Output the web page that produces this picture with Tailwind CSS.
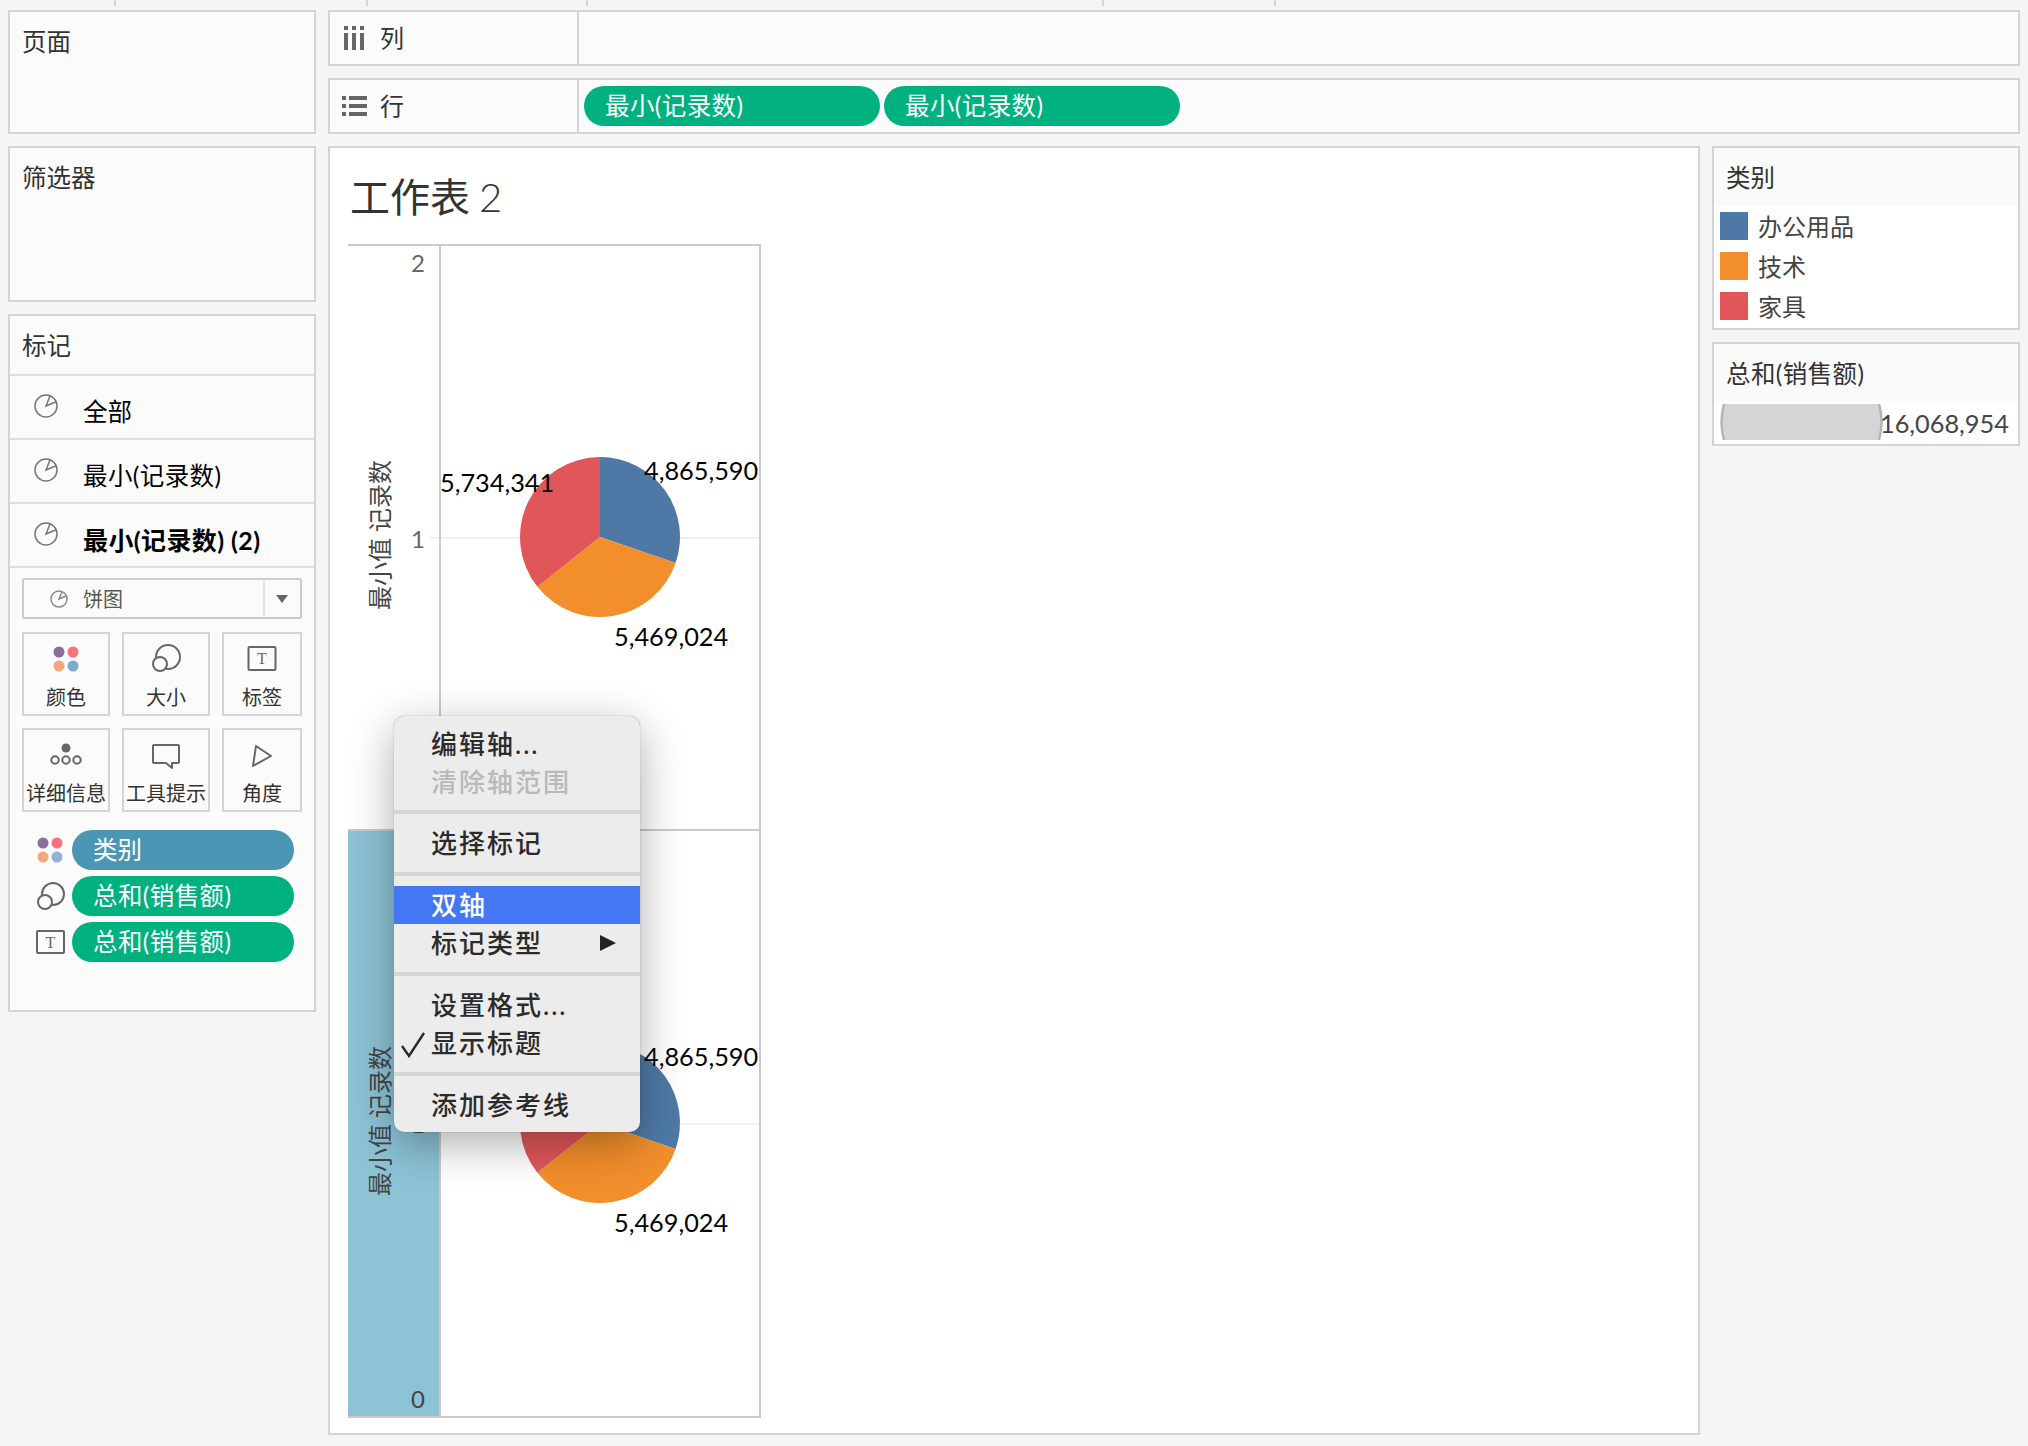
<!DOCTYPE html>
<html lang="zh">
<head>
    <meta charset="UTF-8">
    <title>工作表 2</title>
    <script src="https://cdn.jsdelivr.net/npm/@tailwindcss/browser@4"></script>
</head>
<body class="bg-[#f5f5f5] w-[2028px] h-[1446px] overflow-hidden font-[Lato,'Noto_Sans_CJK_SC',sans-serif] text-[#333]">

    <!-- strip of ticks on top -->
    <div class="flex h-[6px] mb-[4px]">
        <div class="w-[116px] border-r-2 border-[#d4d4d4]"></div>
        <div class="w-[252px] border-r-2 border-[#d4d4d4]"></div>
        <div class="w-[220px] border-r-2 border-[#d4d4d4]"></div>
        <div class="w-[516px] border-r-2 border-[#d4d4d4]"></div>
        <div class="w-[172px] border-r-2 border-[#d4d4d4]"></div>
    </div>

    <div class="flex px-[8px]">

        <!-- left column -->
        <div class="w-[308px] flex flex-col gap-[12px]">
            <div class="h-[124px] bg-[#fbfbfb] border-2 border-[#d4d4d4] pl-[12px] pt-[15px] text-[24.5px] leading-[30px]">页面</div>
            <div class="h-[156px] bg-[#fbfbfb] border-2 border-[#d4d4d4] pl-[12px] pt-[15px] text-[24.5px] leading-[30px]">筛选器</div>

            <div class="h-[698px] bg-[#fbfbfb] border-2 border-[#d4d4d4]">
                <div class="h-[60px] border-b-2 border-[#dedede] pl-[12px] pt-[15px] text-[24.5px] leading-[30px]">标记</div>

                <div class="h-[64px] border-b-2 border-[#dedede] flex items-start pl-[23px] pt-[17px] gap-[24px] text-black">
                    <svg width="26" height="26" viewBox="0 0 26 26" fill="none" stroke="#777" stroke-width="1.5"><circle cx="13" cy="13" r="11"/><path d="M17 3 13 13 23 8.7"/></svg>
                    <span class="text-[24.5px] leading-[30px] mt-[4px]">全部</span>
                </div>
                <div class="h-[64px] border-b-2 border-[#dedede] flex items-start pl-[23px] pt-[17px] gap-[24px] text-black">
                    <svg width="26" height="26" viewBox="0 0 26 26" fill="none" stroke="#777" stroke-width="1.5"><circle cx="13" cy="13" r="11"/><path d="M17 3 13 13 23 8.7"/></svg>
                    <span class="text-[24.5px] leading-[30px] mt-[4px] tracking-[0.4px]">最小(记录数)</span>
                </div>
                <div class="h-[64px] border-b-2 border-[#dedede] flex items-start pl-[23px] pt-[17px] gap-[24px] text-black">
                    <svg width="26" height="26" viewBox="0 0 26 26" fill="none" stroke="#777" stroke-width="1.5"><circle cx="13" cy="13" r="11"/><path d="M17 3 13 13 23 8.7"/></svg>
                    <span class="text-[25px] leading-[30px] mt-[4px] font-bold tracking-[0.4px]">最小(记录数) (2)</span>
                </div>

                <!-- mark type select -->
                <div class="mx-[12px] mt-[10px] h-[41px] border-2 border-[#ccc] rounded-[2px] flex items-center">
                    <div class="w-[241px] h-full border-r-2 border-[#e4e4e4] flex items-center pl-[25px] gap-[14px]">
                        <svg width="20" height="20" viewBox="0 0 20 20" fill="none" stroke="#888" stroke-width="1.5"><circle cx="10" cy="10" r="8"/><path d="M13 3 10 10 17 7"/></svg>
                        <span class="text-[20px] leading-[24px] text-[#555]">饼图</span>
                    </div>
                    <svg class="ml-[10px]" width="14" height="10" viewBox="0 0 14 10"><path d="M1 1h12L7 9z" fill="#666"/></svg>
                </div>

                <!-- mark cards -->
                <div class="mx-[12px] mt-[13px] grid grid-cols-[88px_88px_80px] gap-x-[12px] gap-y-[12px]">
                    <div class="h-[84px] border-2 border-[#d4d4d4] flex flex-col items-center pt-[9px]">
                        <svg width="32" height="32" viewBox="0 0 32 32"><circle cx="9" cy="9" r="5.5" fill="#8a6f9b"/><circle cx="23" cy="9" r="5.5" fill="#f7727f"/><circle cx="9" cy="23" r="5.5" fill="#f4a67a"/><circle cx="23" cy="23" r="5.5" fill="#7ea6cf"/></svg>
                        <span class="text-[20px] leading-[24px] mt-[10px] whitespace-nowrap">颜色</span>
                    </div>
                    <div class="h-[84px] border-2 border-[#d4d4d4] flex flex-col items-center pt-[9px]">
                        <svg width="32" height="32" viewBox="0 0 32 32" fill="none" stroke="#666" stroke-width="2"><circle cx="18" cy="14" r="12"/><circle cx="10" cy="21" r="7" fill="#fbfbfb"/></svg>
                        <span class="text-[20px] leading-[24px] mt-[10px] whitespace-nowrap">大小</span>
                    </div>
                    <div class="h-[84px] border-2 border-[#d4d4d4] flex flex-col items-center pt-[9px]">
                        <svg width="32" height="32" viewBox="0 0 32 32" fill="none"><rect x="2.5" y="4" width="27" height="23" rx="1" stroke="#666" stroke-width="2"/><text x="16" y="21" text-anchor="middle" class="fill-[#666] text-[16px] font-['Liberation_Serif',serif]">T</text></svg>
                        <span class="text-[20px] leading-[24px] mt-[10px] whitespace-nowrap">标签</span>
                    </div>
                    <div class="h-[84px] border-2 border-[#d4d4d4] flex flex-col items-center pt-[9px]">
                        <svg width="32" height="32" viewBox="0 0 32 32" fill="none" stroke="#666" stroke-width="2"><circle cx="16" cy="9" r="4.5" fill="#666" stroke="none"/><circle cx="5" cy="21" r="3.7"/><circle cx="16" cy="21" r="3.7"/><circle cx="27" cy="21" r="3.7"/></svg>
                        <span class="text-[20px] leading-[24px] mt-[10px] whitespace-nowrap">详细信息</span>
                    </div>
                    <div class="h-[84px] border-2 border-[#d4d4d4] flex flex-col items-center pt-[9px]">
                        <svg width="32" height="32" viewBox="0 0 32 32" fill="none" stroke="#666" stroke-width="2" stroke-linejoin="round"><path d="M4 6h24a1 1 0 0 1 1 1v16a1 1 0 0 1-1 1h-6v5l-6-5H4a1 1 0 0 1-1-1V7a1 1 0 0 1 1-1z"/></svg>
                        <span class="text-[20px] leading-[24px] mt-[10px] whitespace-nowrap">工具提示</span>
                    </div>
                    <div class="h-[84px] border-2 border-[#d4d4d4] flex flex-col items-center pt-[9px]">
                        <svg width="32" height="32" viewBox="0 0 32 32" fill="none" stroke="#666" stroke-width="2" stroke-linejoin="round"><path d="M10 7 25 17 7 27z"/></svg>
                        <span class="text-[20px] leading-[24px] mt-[10px] whitespace-nowrap">角度</span>
                    </div>
                </div>

                <!-- encodings -->
                <div class="mt-[18px] pl-[26px] flex flex-col gap-[6px]">
                    <div class="flex items-center gap-[6px]">
                        <svg width="30" height="40" viewBox="0 0 30 40"><circle cx="7" cy="13" r="5.5" fill="#8a6f9b"/><circle cx="21" cy="13" r="5.5" fill="#f7727f"/><circle cx="7" cy="27" r="5.5" fill="#f4a67a"/><circle cx="21" cy="27" r="5.5" fill="#93b1d3"/></svg>
                        <div class="w-[222px] h-[40px] rounded-full bg-[#4b96b5] text-white text-[24.5px] leading-[40px] pl-[21px]">类别</div>
                    </div>
                    <div class="flex items-center gap-[6px]">
                        <svg width="30" height="40" viewBox="0 0 30 40" fill="none" stroke="#666" stroke-width="2"><circle cx="17" cy="18" r="11"/><circle cx="9" cy="26" r="7" fill="#fbfbfb"/></svg>
                        <div class="w-[222px] h-[40px] rounded-full bg-[#00b180] text-white text-[24.5px] leading-[40px] pl-[21px] tracking-[0.4px]">总和(销售额)</div>
                    </div>
                    <div class="flex items-center gap-[6px]">
                        <svg width="30" height="40" viewBox="0 0 30 40" fill="none"><rect x="1" y="9" width="27" height="22" rx="1" stroke="#666" stroke-width="2"/><text x="14.5" y="26" text-anchor="middle" class="fill-[#666] text-[16px] font-['Liberation_Serif',serif]">T</text></svg>
                        <div class="w-[222px] h-[40px] rounded-full bg-[#00b180] text-white text-[24.5px] leading-[40px] pl-[21px] tracking-[0.4px]">总和(销售额)</div>
                    </div>
                </div>
            </div>
        </div>

        <!-- center column -->
        <div class="w-[1692px] ml-[12px]">
            <div class="h-[56px] bg-[#fbfbfb] border-2 border-[#d4d4d4] flex">
                <div class="w-[249px] h-full border-r-2 border-[#d4d4d4] flex items-center pl-[13px] gap-[13px]">
                    <svg width="24" height="26" viewBox="0 0 24 26" fill="#666"><rect x="1" y="1" width="4" height="4"/><rect x="1" y="8" width="4" height="17"/><rect x="9" y="1" width="4" height="4"/><rect x="9" y="8" width="4" height="17"/><rect x="17" y="1" width="4" height="4"/><rect x="17" y="8" width="4" height="17"/></svg>
                    <span class="text-[24px] leading-[30px]">列</span>
                </div>
            </div>
            <div class="h-[56px] mt-[12px] bg-[#fbfbfb] border-2 border-[#d4d4d4] flex">
                <div class="w-[249px] h-full border-r-2 border-[#d4d4d4] flex items-center pl-[12px] gap-[13px]">
                    <svg width="25" height="22" viewBox="0 0 25 22" fill="#666"><rect x="0" y="1" width="4" height="4"/><rect x="7" y="1" width="18" height="4"/><rect x="0" y="9" width="4" height="4"/><rect x="7" y="9" width="18" height="4"/><rect x="0" y="17" width="4" height="4"/><rect x="7" y="17" width="18" height="4"/></svg>
                    <span class="text-[24px] leading-[30px]">行</span>
                </div>
                <div class="flex items-center pl-[5px] gap-[4px]">
                    <div class="w-[296px] h-[40px] rounded-full bg-[#00b180] text-white text-[24.5px] leading-[40px] pl-[21px] tracking-[0.4px]">最小(记录数)</div>
                    <div class="w-[296px] h-[40px] rounded-full bg-[#00b180] text-white text-[24.5px] leading-[40px] pl-[21px] tracking-[0.4px]">最小(记录数)</div>
                </div>
            </div>

            <div class="flex mt-[12px]">
                <!-- worksheet -->
                <div class="relative w-[1372px] h-[1289px] bg-white border-2 border-[#d4d4d4]">
                    <div class="h-[94px] pl-[20px] pt-[23px] text-[40px] leading-[52px] text-[#333] whitespace-nowrap">工作表<span class="font-light ml-[9px]">2</span></div>

                    <svg class="ml-[16px]" width="418" height="1178" viewBox="346 242 418 1178">
                        <!-- top pane -->
                        <path d="M430 538H759" stroke="#f0f0f0" stroke-width="2"/>
                        <path d="M600 537V457A80 80 0 0 1 675.6 563.1Z" fill="#4e79a7"/>
                        <path d="M600 537 675.6 563.1A80 80 0 0 1 537.4 586.8Z" fill="#f28e2b"/>
                        <path d="M600 537 537.4 586.8A80 80 0 0 1 600 457Z" fill="#e15759"/>
                        <text x="379" y="535" transform="rotate(-90 379 535)" text-anchor="middle" dominant-baseline="central" class="fill-[#444] text-[24px]">最小值 记录数</text>
                        <text x="418" y="272" text-anchor="middle" class="fill-[#666] text-[24px]">2</text>
                        <text x="418" y="548" text-anchor="middle" class="fill-[#666] text-[24px]">1</text>
                        <text x="644" y="480" class="fill-black text-[25.3px]">4,865,590</text>
                        <text x="440" y="492" class="fill-black text-[25.3px]">5,734,341</text>
                        <text x="614" y="646" class="fill-black text-[25.3px]">5,469,024</text>

                        <!-- bottom pane -->
                        <rect x="348" y="830" width="92" height="586" fill="#8cc3d5"/>
                        <path d="M430 1124H759" stroke="#f0f0f0" stroke-width="2"/>
                        <path d="M600 1123V1043A80 80 0 0 1 675.6 1149.1Z" fill="#4e79a7"/>
                        <path d="M600 1123 675.6 1149.1A80 80 0 0 1 537.4 1172.8Z" fill="#f28e2b"/>
                        <path d="M600 1123 537.4 1172.8A80 80 0 0 1 600 1043Z" fill="#e15759"/>
                        <text x="379" y="1121" transform="rotate(-90 379 1121)" text-anchor="middle" dominant-baseline="central" class="fill-[#444] text-[24px]">最小值 记录数</text>
                        <text x="418" y="1133" text-anchor="middle" class="fill-[#444] text-[24px]">1</text>
                        <text x="418" y="1408" text-anchor="middle" class="fill-[#444] text-[24px]">0</text>
                        <text x="644" y="1066" class="fill-black text-[25.3px]">4,865,590</text>
                        <text x="614" y="1232" class="fill-black text-[25.3px]">5,469,024</text>

                        <!-- frame -->
                        <path d="M348 245H760V1417H348M440 245V1416M348 830H760" fill="none" stroke="#cacaca" stroke-width="2"/>
                    </svg>

                    <!-- context menu -->
                    <div class="absolute left-[64px] top-[568px] w-[246px] h-[416px] bg-[#ececec] rounded-[10px] shadow-[0_12px_44px_rgba(0,0,0,0.32),0_0_1px_rgba(0,0,0,0.5)] pt-[9px] text-[26px] leading-[38px] tracking-[2px] text-[#2b2b2b] font-medium overflow-hidden">
                        <div class="h-[38px] pl-[37px]">编辑轴...</div>
                        <div class="h-[38px] pl-[37px] text-[#b9b9b9]">清除轴范围</div>
                        <div class="h-[4px] mt-[9px] mb-[10px] bg-[#d6d6d6]"></div>
                        <div class="h-[38px] pl-[37px]">选择标记</div>
                        <div class="h-[4px] my-[10px] bg-[#d6d6d6]"></div>
                        <div class="h-[38px] pl-[37px] bg-[#4477f3] text-white">双轴</div>
                        <div class="h-[38px] pl-[37px] flex items-center justify-between pr-[24px]">
                            <span>标记类型</span>
                            <svg width="16" height="16" viewBox="0 0 16 16"><path d="M0 0 16 8 0 16z" fill="#222"/></svg>
                        </div>
                        <div class="h-[4px] my-[10px] bg-[#d6d6d6]"></div>
                        <div class="h-[38px] pl-[37px]">设置格式...</div>
                        <div class="relative h-[38px] pl-[37px]">
                            <svg class="absolute left-[6px] top-[8px]" width="26" height="26" viewBox="0 0 26 26" fill="none" stroke="#2b2b2b" stroke-width="2.4"><path d="M2 14 9 24 24 1"/></svg>
                            显示标题
                        </div>
                        <div class="h-[4px] mt-[10px] mb-[10px] bg-[#d6d6d6]"></div>
                        <div class="h-[38px] pl-[37px]">添加参考线</div>
                    </div>
                </div>

                <!-- legends -->
                <div class="w-[308px] ml-[12px] flex flex-col gap-[12px]">
                    <div class="h-[184px] bg-white border-2 border-[#d4d4d4]">
                        <div class="h-[58px] bg-[#fafafa] pl-[12px] pt-[15px] text-[24.5px] leading-[30px] text-[#333]">类别</div>
                        <div class="pl-[6px] pt-[6px] flex flex-col gap-[12px] text-[24px] leading-[30px] text-[#444]">
                            <div class="h-[28px] flex items-center gap-[10px]"><span class="w-[28px] h-[28px] bg-[#4e79a7]"></span><span class="pt-[2px]">办公用品</span></div>
                            <div class="h-[28px] flex items-center gap-[10px]"><span class="w-[28px] h-[28px] bg-[#f28e2b]"></span><span class="pt-[2px]">技术</span></div>
                            <div class="h-[28px] flex items-center gap-[10px]"><span class="w-[28px] h-[28px] bg-[#e15759]"></span><span class="pt-[2px]">家具</span></div>
                        </div>
                    </div>
                    <div class="h-[104px] bg-white border-2 border-[#d4d4d4]">
                        <div class="h-[58px] bg-[#fafafa] pl-[12px] pt-[15px] text-[24.5px] leading-[30px] text-[#333] tracking-[0.4px]">总和(销售额)</div>
                        <div class="flex items-start pl-[6px] pt-[2px]">
                            <svg width="163" height="36" viewBox="0 0 163 36" fill="none"><path d="M4 0H159Q162 18 159 36H4Q-1 18 4 0Z" fill="#d5d5d5"/><path d="M4 0Q-1 18 4 36M159 0Q164 18 159 36" stroke="#b5b5b5" stroke-width="2.5"/></svg>
                            <span class="text-[25.3px] leading-[36px] text-[#444] mt-[1px] -ml-[3px]">16,068,954</span>
                        </div>
                    </div>
                </div>
            </div>
        </div>
    </div>
</body>
</html>
